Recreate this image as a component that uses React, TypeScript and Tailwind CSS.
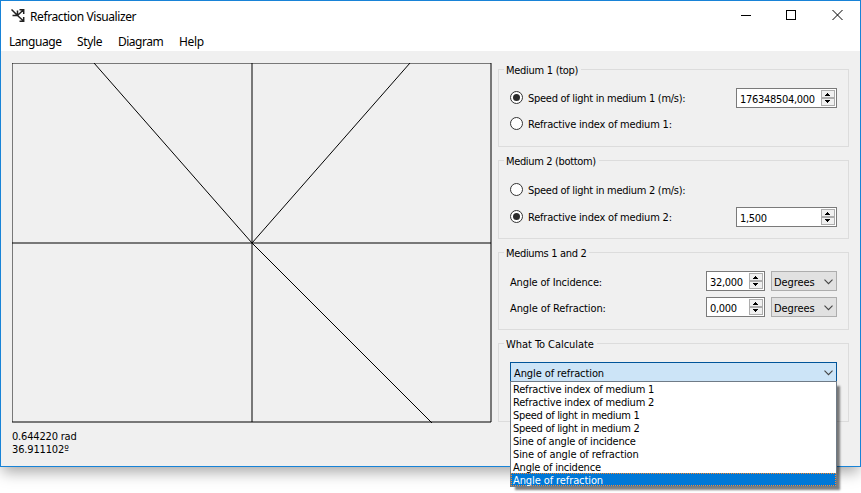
import type { ReactNode } from "react";

function Radio({ on }: { on?: boolean }) {
  return (
    <span className="mb-px flex size-[13px] shrink-0 items-center justify-center rounded-full border border-[#333] bg-white">
      {on && <span className="size-[7px] rounded-full bg-[#2b2b2b]" />}
    </span>
  );
}

function Stepper() {
  return (
    <svg width="14" height="16" viewBox="0 0 14 16" className="shrink-0" shapeRendering="crispEdges">
      <path d="M.5.5h13v7H.5zM.5 8.5h13v7H.5z" fill="#f0f0f0" stroke="#adadad" />
      <path d="M6 3h1v1H6zM5 4h3v1H5zM4 5h5v1H4z" fill="#000" />
      <path d="M4 10h5v1H4zM5 11h3v1H5zM6 12h1v1H6z" fill="#000" />
    </svg>
  );
}

function Spin({ value, className }: { value: string; className: string }) {
  return (
    <div className={`flex h-5 items-center justify-between border border-[#7a7a7a] bg-white pr-px pl-[3px] ${className}`}>
      <span className="pt-[2px] tracking-[-0.3px]">{value}</span>
      <Stepper />
    </div>
  );
}

function Chevron() {
  return (
    <svg width="9" height="6" viewBox="0 0 9 6" className="mt-px shrink-0" fill="none" stroke="#444" strokeWidth="1.1">
      <path d="M.5.6 4.5 4.6 8.5.6" />
    </svg>
  );
}

function Unit() {
  return (
    <div className="ml-[6px] flex h-5 w-[66px] items-center justify-between border border-[#adadad] bg-[#e1e1e1] pr-[3px] pl-[2px]">
      <span className="pt-[2px] tracking-[-0.1px]">Degrees</span>
      <Chevron />
    </div>
  );
}

function Group({ title, className, titleClass, children }: { title: string; className: string; titleClass: string; children: ReactNode }) {
  return (
    <section className={`flex w-[351px] flex-col border border-[#dcdcdc] pr-[11px] pl-[11px] ${className}`}>
      <h2 className="-mt-[8px] -ml-[6px] mb-px flex h-4 w-fit shrink-0 items-center bg-[#f0f0f0] pr-[3px] pl-[2px]">
        <span className={titleClass}>{title}</span>
      </h2>
      {children}
    </section>
  );
}

function Row({ children, className = "" }: { children: ReactNode; className?: string }) {
  return <div className={`flex h-5 shrink-0 items-center ${className}`}>{children}</div>;
}

const options = [
  { text: "Refractive index of medium 1", fit: "tracking-[-0.18px]" },
  { text: "Refractive index of medium 2", fit: "tracking-[-0.18px]" },
  { text: "Speed of light in medium 1", fit: "tracking-[-0.3px]" },
  { text: "Speed of light in medium 2", fit: "tracking-[-0.3px]" },
  { text: "Sine of angle of incidence", fit: "tracking-[-0.2px]" },
  { text: "Sine of angle of refraction", fit: "tracking-[-0.1px]" },
  { text: "Angle of incidence", fit: "tracking-[-0.2px]" },
  { text: "Angle of refraction", fit: "tracking-[-0.1px]" },
];

export default function App() {
  return (
    <div className="h-[493px] w-[861px] overflow-hidden bg-white font-['DejaVu_Sans_Condensed','DejaVu_Sans',sans-serif] text-[11px] leading-[13px] whitespace-nowrap text-black">
      <div className="flex h-[467px] w-[861px] flex-col border border-[#1883d7] bg-[#f0f0f0] shadow-[0_7px_14px_-2px_rgba(0,0,0,0.35)]">
        <header className="flex h-[30px] shrink-0 items-center bg-white pr-[17px] pl-[10px] font-['Noto_Sans',sans-serif] text-[12px]">
          <svg width="14" height="14" viewBox="0 0 14 14" fill="none" stroke="#222" strokeWidth="1.5">
            <path d="M.5.5 6.5 6.5M6.5 6.5 12.5.8M8.5.8H12.7V5M1.5 6.5H6.5V1.5M6.5 6.5l6 5.5M12.7 8v4.3H8.5" />
          </svg>
          <span className="ml-[5px] grow tracking-[-0.4px]">Refraction Visualizer</span>
          <svg width="102" height="10" viewBox="0 0 102 10" fill="none" stroke="#000" className="mb-[2px]">
            <path d="M0 5.5h10M45.5.5h9v9h-9z" shapeRendering="crispEdges" />
            <path d="m91.5 0 10 10M101.5 0l-10 10" />
          </svg>
        </header>
        <nav className="flex h-5 shrink-0 items-center bg-white pl-2 font-['Noto_Sans',sans-serif] text-[12px]">
          <span className="w-[68px] tracking-[-0.45px]">Language</span>
          <span className="w-[41px] tracking-[-0.35px]">Style</span>
          <span className="w-[61px] tracking-[-0.5px]">Diagram</span>
          <span className="tracking-[-0.3px]">Help</span>
        </nav>
        <main className="flex grow pl-[11px]">
          <div className="w-[486px] pt-3">
            <svg width="480" height="360" viewBox="0 0 480 360" fill="none" stroke="#000" className="block">
              <path d="M0 0h479v359H0zM240 0v359M0 180h479" />
              <path d="M82 0 240 180 398 0M240 180l180 180" />
            </svg>
            <p className="mt-[7px] tracking-[-0.18px]">0.644220 rad</p>
            <p className="tracking-[-0.15px]">36.911102º</p>
          </div>
          <div className="flex flex-col gap-[13px] pt-[18px]">
            <Group title="Medium 1 (top)" titleClass="tracking-[-0.28px]" className="h-[78px]">
              <Row className="mt-[9px] justify-between">
                <Radio on />
                <span className="ml-[5px] grow tracking-[-0.28px]">Speed of light in medium 1 (m/s):</span>
                <Spin value="176348504,000" className="w-[101px]" />
              </Row>
              <Row className="mt-[6px]">
                <Radio />
                <span className="ml-[5px] tracking-[-0.2px]">Refractive index of medium 1:</span>
              </Row>
            </Group>
            <Group title="Medium 2 (bottom)" titleClass="tracking-[-0.35px]" className="h-[79px]">
              <Row className="mt-[10px]">
                <Radio />
                <span className="ml-[5px] tracking-[-0.28px]">Speed of light in medium 2 (m/s):</span>
              </Row>
              <Row className="mt-[7px]">
                <Radio on />
                <span className="ml-[5px] grow tracking-[-0.2px]">Refractive index of medium 2:</span>
                <Spin value="1,500" className="w-[101px]" />
              </Row>
            </Group>
            <Group title="Mediums 1 and 2" titleClass="tracking-[-0.33px]" className="h-[78px]">
              <Row className="mt-[9px]">
                <span className="grow pt-[2px] tracking-[-0.15px]">Angle of Incidence:</span>
                <Spin value="32,000" className="w-[59px]" />
                <Unit />
              </Row>
              <Row className="mt-[6px]">
                <span className="grow pt-[2px] tracking-[-0.1px]">Angle of Refraction:</span>
                <Spin value="0,000" className="w-[59px]" />
                <Unit />
              </Row>
            </Group>
            <Group title="What To Calculate" titleClass="tracking-[-0.05px]" className="h-[79px]">
              <div className="relative mt-[9px]">
                <div className="flex h-5 w-[327px] items-center justify-between border border-[#005499] bg-[#cce4f7] pr-[3px] pl-[3px]">
                  <span className="pt-[2px] tracking-[-0.1px]">Angle of refraction</span>
                  <Chevron />
                </div>
                <ul className="absolute top-[19px] left-0 w-[327px] border border-[#6f7b87] bg-white shadow-[4px_4px_2px_-1px_rgba(0,0,0,0.5)]">
                  {options.map(({ text, fit }, i) => (
                    <li
                      key={text}
                      className={
                        i === 7
                          ? "flex h-[13px] items-center border border-dotted border-[#ff8728] bg-[#0078d7] pl-px text-white"
                          : "flex h-[13px] items-center pl-[2px]"
                      }
                    >
                      <span className={`pt-[2px] ${fit}`}>{text}</span>
                    </li>
                  ))}
                </ul>
              </div>
            </Group>
          </div>
        </main>
      </div>
    </div>
  );
}
